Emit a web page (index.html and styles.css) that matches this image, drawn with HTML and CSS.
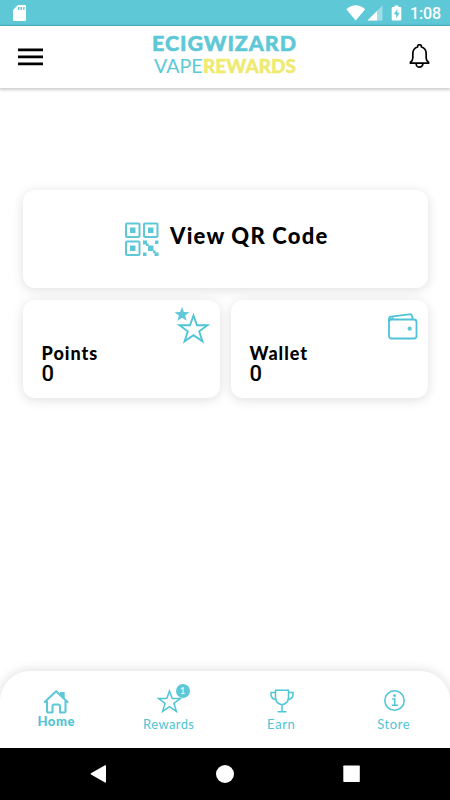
FILE: index.html
```html
<!DOCTYPE html>
<html lang="en">
<head>
<meta charset="utf-8">
<meta name="viewport" content="width=device-width, initial-scale=1">
<title>Ecigwizard Vape Rewards</title>
<link rel="stylesheet" href="styles.css">
</head>
<body>
<div class="status">
  <svg class="sd" width="13" height="16" viewBox="0 0 13 16"><path fill="#fff" d="M5 0h7q1 0 1 1v14q0 1-1 1H1q-1 0-1-1V5z"/><path fill="#5ec8d7" d="M5 2h1.500v3H5zM7.500 2H9v3H7.500zM10.200 2h1.300v3h-1.300z"/></svg>
  <svg class="signals" width="56" height="18" viewBox="0 0 56 18"><path fill="#fff" d="M.3 4.300Q9.700-3.700 19.200 4.300L9.700 15.500z"/><path fill="#fff" fill-opacity=".4" d="M36.500 .500v15H21.500z"/><path fill="#fff" d="M31 6v9.500h-9.500z"/><path fill="#fff" d="M48.500 .500h4v1.500h1.800q1 0 1 1v11.500q0 1-1 1h-7.600q-1 0-1-1V3q0-1 1-1h1.800z"/><path fill="#5ec8d7" d="M51.500 4l-3.800 5.200h2.500v4l3.500-5.400h-2.400z"/></svg>
  <span class="clock">1:08</span>
</div>
<header class="header">
  <svg class="menu" width="25" height="18" viewBox="0 0 25 18"><path d="M0 1.800h25M0 8.900h25M0 15.800h25" stroke="#000" stroke-width="2.800"/></svg>
  <svg class="logo" width="150" height="46" viewBox="0 0 150 46"><text class="brand" x="2" y="19.700" textLength="144" lengthAdjust="spacing">ECIGWIZARD</text><text class="vape" x="4" y="41.700" textLength="48.500" lengthAdjust="spacingAndGlyphs">VAPE</text><text class="rewards" x="53" y="41.700" textLength="93" lengthAdjust="spacingAndGlyphs">REWARDS</text></svg>
  <svg class="bell" width="21" height="25" viewBox="0 0 22 26" fill="none" stroke="#000" stroke-width="1.800" stroke-linejoin="round"><path d="M9 3V2.600a2 2 0 0 1 4 0V3c3.200 1 5 3.500 5 7v4.500c0 2 .5 3.200 2.500 4.500v1h-19v-1C3.500 17.700 4 16.500 4 14.500V10c0-3.500 1.800-6 5-7z"/><path d="M7.500 20.500a3.500 3.700 0 0 0 7 0"/></svg>
</header>
<main class="main">
  <section class="card qr">
    <svg width="36" height="36" viewBox="0 0 36 36"><g fill="none" stroke="#5ec8d7" stroke-width="2"><rect x="2" y="1.500" width="13.500" height="13.500" rx="1"/><rect x="20" y="1.500" width="13.500" height="13.500" rx="1"/><rect x="2" y="19.500" width="13.500" height="13.500" rx="1"/></g><path fill="#5ec8d7" d="M6 5.500h5.500V11H6zM24 5.500h5.500V11H24zM6 23.500h5.500V29H6zM19 18.500h4v4h-4zM31 18.500h3.500V22H31zM24 23.500h5.500V29H24zM22 21.500h2.500V24H22zM19 30.500h3.500V34H19zM29 28.500h2.500V31H29zM30.500 30.500h4V34h-4z"/></svg>
    <h1>View QR Code</h1>
  </section>
  <div class="pair">
    <section class="card stat">
      <svg class="corner stars" width="36" height="38" viewBox="0 0 36 38"><path fill="#5ec8d7" d="M8 1l1.900 5.100 5.500.1-4.300 3.400 1.500 5.200L8 11.800l-4.600 3 1.500-5.200L.6 6.200l5.500-.1z"/><path fill="none" stroke="#50c4d5" stroke-width="1.900" d="M19.500 9.500l3.500 9.700h10.500l-8.300 6.100 3.200 10-8.900-6.100-8.900 6.100 3.200-10-8.300-6.100H16z"/></svg>
      <h2>Points</h2><p>0</p>
    </section>
    <section class="card stat">
      <svg class="corner wallet" width="30" height="28" viewBox="0 0 30 28" fill="none" stroke="#50c4d5" stroke-width="1.800"><rect x="1" y="6.500" width="27.500" height="19" rx="2.500"/><path d="M1 9.500V6q0-2 2-2.300L21 1.300q2.500-.4 3 1.700l.7 3.500M2 6.500L5.500 5"/><circle cx="21.700" cy="15.700" r="2.100" fill="#5ec8d7" stroke="none"/></svg>
      <h2>Wallet</h2><p>0</p>
    </section>
  </div>
</main>
<nav class="tabs">
  <a class="tab active"><svg width="28" height="27" viewBox="0 0 28 27" fill="none" stroke="#5ec8d7" stroke-width="2.100" stroke-linejoin="round" stroke-linecap="round"><path d="M5 13v10q0 1 1 1h4.500v-6q0-2 2-2H16q2 0 2 2v6h4.500q1 0 1-1V13M2.700 13.500L14.200 2.700l11.300 10.800"/><path fill="#5ec8d7" stroke="none" d="M18 3.500h4.700V11L18 6.500z"/></svg><span>Home</span></a>
  <a class="tab"><svg width="28" height="28" viewBox="0 0 28 28"><path fill="none" stroke="#4fc5d5" stroke-width="1.500" d="M14.500 3l2.700 7.500h8.200l-6.500 4.900 2.500 8-6.900-4.700-6.900 4.700 2.500-8-6.500-4.900h8.200z"/></svg><b class="badge">1</b><span class="long">Rewards</span></a>
  <a class="tab"><svg width="28" height="28" viewBox="0 0 28 28" fill="none" stroke="#4fc5d5" stroke-width="1.500"><path d="M8.500 2.200h13v7.500q0 5.500-6.500 7-6.500-1.500-6.500-7zM8.500 4.500H4v2q0 4.500 6 5.500M21.500 4.500H26v2q0 4.500-6 5.500M15 16.700v7M10.500 23.700h9"/></svg><span>Earn</span></a>
  <a class="tab"><svg width="28" height="28" viewBox="0 0 28 28" fill="none" stroke="#4fc5d5" stroke-width="1.500"><circle cx="14.500" cy="12.500" r="9.700"/><path d="M12.200 11h2.600v6M12 17.200h6"/><circle cx="14.500" cy="7.700" r="1.400" fill="#4fc5d5" stroke="none"/></svg><span>Store</span></a>
</nav>
<div class="android">
  <svg width="450" height="52" viewBox="0 0 450 52" fill="#fff"><path d="M105 17.300q1-.5 1 .7v15.800q0 1.200-1 .7L91 26.500q-1-.6 0-1.200z"/><circle cx="225" cy="26" r="9"/><rect x="343.300" y="17.500" width="16.500" height="16.500" rx=".7"/></svg>
</div>
</body>
</html>
```
FILE: styles.css
```css
* { box-sizing: border-box; }
body { margin: 0; width: 450px; height: 800px; display: flex; flex-direction: column; overflow: hidden; background: #fff; font-family: Lato, sans-serif; color: #000; }
h1, h2, p { margin: 0; }
svg { display: block; flex: none; }
.status { height: 26px; background: #5ec8d7; display: flex; align-items: flex-start; padding: 5px 9px 0 13px; border-bottom: 1px solid #4bbccd; }
.signals { margin-left: auto; }
.clock { font: 500 16px/18px Roboto, sans-serif; color: #fff; margin-left: 8px; letter-spacing: -.1px; }
.header { height: 61.500px; flex: none; display: flex; justify-content: space-between; padding: 0 20.500px 0 18px; box-shadow: 0 1px 3px 1px rgba(0,0,0,.2); position: relative; }
.menu { margin-top: 22px; }
.logo { margin: 5px 1px 0 0; }
.brand { font: 900 21.500px Lato; fill: #5ec8d7; stroke: #5ec8d7; stroke-width: .5px; }
.vape { font: 400 19.500px Lato; fill: #5ec8d7; }
.rewards { font: 900 19.500px Lato; fill: #efea70; stroke: #efea70; stroke-width: .4px; }
.bell { margin-top: 18px; }
.main { flex: 1; padding: 102px 22.500px 0; display: flex; flex-direction: column; gap: 12px; }
.card { background: #fff; border-radius: 12px; box-shadow: 0 2px 12px rgba(0,0,0,.13); position: relative; }
.qr { height: 98px; display: flex; padding: 32px 0 0 101px; }
.qr h1 { font-size: 22px; line-height: 28px; font-weight: 900; margin-left: 10.500px; letter-spacing: 1.200px; white-space: nowrap; }
.pair { display: grid; grid-template-columns: 1fr 1fr; gap: 11px; }
.stat { height: 98px; padding: 43px 19px 0; }
.stat h2 { font-size: 18px; line-height: 21px; font-weight: 900; letter-spacing: 1px; }
.stat p { font: 500 22px/20px Roboto, sans-serif; }
.corner { position: absolute; }
.stars { right: 10px; top: 6.500px; }
.wallet { right: 10px; top: 13px; }
.tabs { height: 77px; flex: none; display: grid; grid-template-columns: repeat(4, 1fr); border-radius: 30px 30px 0 0; box-shadow: 0 0 12px rgba(0,0,0,.15); padding-top: 17px; }
.tab { display: flex; flex-direction: column; align-items: center; position: relative; color: #50c4d5; font-size: 13px; line-height: 16px; letter-spacing: .6px; }
.tab svg { height: 28px; }
.long { letter-spacing: .4px; }
.active { font-weight: 900; }
.active span { margin-top: -3px; }
.badge { position: absolute; left: 63px; top: -4px; width: 14px; height: 14px; border-radius: 50%; background: #5ec8d7; color: #fff; font: 400 9px/14px Lato; text-align: center; letter-spacing: 0; }
.android { height: 52px; background: #000; flex: none; position: relative; }
```
